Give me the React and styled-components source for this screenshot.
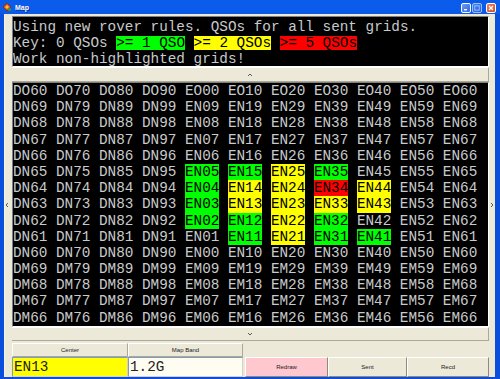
import React from 'react';
import styled, { createGlobalStyle } from 'styled-components';

const Global = createGlobalStyle`
  html, body { margin: 0; padding: 0; overflow: hidden; background: #0A4FDC; }
  #root { width: 500px; height: 379px; }
`;

const Window = styled.div`
  width: 500px;
  height: 379px;
  display: flex;
  flex-direction: column;
  background: #0A4FDC;
`;

const TitleBar = styled.div`
  height: 14px;
  flex: none;
  display: flex;
  align-items: center;
  padding: 0 4px 0 2px;
  background: linear-gradient(to bottom, #0A5BEA 0%, #0B5CEC 60%, #0A58E4 100%);
  font-family: "Liberation Sans", Arial, sans-serif;
`;

const TitleText = styled.span`
  color: #fff;
  font-weight: bold;
  font-size: 7px;
  margin-left: 3px;
  flex: 1;
  text-shadow: 1px 1px 0 #0A2FA0;
`;

const Controls = styled.div`
  display: flex;
  gap: 1px;
  align-items: center;
  margin-top: 2px;
`;

const CtrlBtn = styled.div`
  width: 10px;
  height: 10px;
  box-sizing: border-box;
  border: 1px solid #fff;
  border-radius: 2px;
  background: ${p => p.$close ? 'linear-gradient(135deg, #E9826A, #D2461E)' : 'linear-gradient(135deg, #6D9BF5, #2F66E2)'};
  opacity: ${p => p.$disabled ? 0.6 : 1};
  margin-left: ${p => p.$close ? '3px' : '0'};
  display: flex;
  align-items: center;
  justify-content: center;
`;

const Frame = styled.div`
  flex: 1;
  display: flex;
  padding: 0 5px 2px 4px;
  min-height: 0;
`;

const Client = styled.div`
  flex: 1;
  background: #ECE9D8;
  display: grid;
  grid-template-columns: 8px 1fr 6px;
  grid-template-rows: 53px 15px 245px 14px 36px;
  box-shadow: inset 1px 0 0 #F4F2E8;
`;

const Mono = styled.div`
  font-family: "Liberation Mono", "Courier New", monospace;
  font-size: 14.33px;
  color: #C8CACC;
  background: #000;
  overflow: hidden;
  box-sizing: border-box;
`;

const TopPanel = styled(Mono)`
  grid-column: 2;
  grid-row: 1;
  margin-top: 2px;
  border: 1px solid;
  border-color: #7F7F7F #FFFFFF #FFFFFF #7F7F7F;
  padding-top: 2px;
  line-height: 16px;
  white-space: pre;
`;

const Line = styled.div`
  height: 16px;
`;

const Hl = styled.span`
  display: inline-block;
  height: 14px;
  line-height: 14px;
  vertical-align: top;
  margin-top: 1px;
  color: #000;
  background: ${p => p.$c};
`;

const ArrowBar = styled.div`
  grid-column: 2;
  grid-row: ${p => p.$row};
  box-sizing: border-box;
  border-top: 1px solid #FFFFFF;
  border-bottom: 1px solid #ACA899;
  border-right: 1px solid #ACA899;
  background: #ECE9D8;
  display: flex;
  align-items: center;
  justify-content: center;
`;

const SideArrow = styled.div`
  grid-row: 3;
  grid-column: ${p => p.$col};
  display: flex;
  align-items: center;
  justify-content: ${p => p.$col === 1 ? 'flex-start' : 'flex-end'};
  padding: 0 1px;
`;

const GridPanel = styled(Mono)`
  grid-column: 2;
  grid-row: 3;
  border: 1px solid;
  border-color: #7F7F7F #FFFFFF #FFFFFF #7F7F7F;
  display: grid;
  grid-template-columns: repeat(11, 4ch);
  grid-auto-rows: 16.2px;
  column-gap: 1ch;
  align-content: start;
`;

const Cell = styled.span`
  line-height: 16.2px;
  white-space: pre;
  background: ${p => p.$bg || 'transparent'};
  color: ${p => p.$bg ? '#000' : '#C8CACC'};
`;

const Bottom = styled.div`
  grid-column: 2;
  grid-row: 5;
  display: grid;
  grid-template-columns: 116px 115px 85px 79px 1fr;
  grid-template-rows: 14px 20px;
  padding-top: 2px;
`;

const Label = styled.div`
  grid-row: 1;
  grid-column: ${p => p.$col};
  box-sizing: border-box;
  border: 1px solid;
  border-color: #FFFFFF #ACA899 #ACA899 #FFFFFF;
  background: #ECE9D8;
  font-family: "Liberation Sans", Arial, sans-serif;
  font-size: 6px;
  color: #222;
  display: flex;
  align-items: center;
  justify-content: center;
`;

const Field = styled.div`
  grid-row: 2;
  grid-column: ${p => p.$col};
  box-sizing: border-box;
  border: 1px solid;
  border-color: #7F9DB9 #D4D0C8 #D4D0C8 #7F9DB9;
  background: ${p => p.$bg};
  font-family: "Liberation Mono", "Courier New", monospace;
  font-size: 14.33px;
  color: #222;
  display: flex;
  align-items: center;
  padding-left: 1px;
`;

const Button = styled.div`
  grid-row: 2;
  grid-column: ${p => p.$col};
  margin-left: ${p => p.$first ? '2px' : '0'};
  box-sizing: border-box;
  border: 1px solid;
  border-color: #FFFFFF #8E8B7C #8E8B7C #FFFFFF;
  background: ${p => p.$bg || '#ECE9D8'};
  font-family: "Liberation Sans", Arial, sans-serif;
  font-size: 6px;
  color: #222;
  display: flex;
  align-items: center;
  justify-content: center;
`;

const Chevron = ({ dir }) => {
  const pts = {
    up: '0,3 2,1 4,3',
    down: '0,1 2,3 4,1',
    left: '3,0 1,2 3,4',
    right: '1,0 3,2 1,4',
  }[dir];
  return (
    <svg width="4" height="4" viewBox="0 0 4 4">
      <polyline points={pts} fill="none" stroke="#5A5A5A" strokeWidth="1" />
    </svg>
  );
};

const AppIcon = () => (
  <svg width="10" height="10" viewBox="0 0 10 10">
    <path d="M1 5 L5 1 L9 5 L5 9 Z" fill="#D8541C" stroke="#7A2A08" strokeWidth="0.8" />
    <path d="M3 5 L5 3 L7 5 L5 7 Z" fill="#F5C040" />
    <circle cx="7.5" cy="7.5" r="1.6" fill="#3A9A2A" />
  </svg>
);

const cols = ['D6', 'D7', 'D8', 'D9', 'E0', 'E1', 'E2', 'E3', 'E4', 'E5', 'E6'];
const rows = ['O0', 'N9', 'N8', 'N7', 'N6', 'N5', 'N4', 'N3', 'N2', 'N1', 'N0', 'M9', 'M8', 'M7', 'M6'];

const G = '#00FF00';
const Y = '#FFFF00';
const R = '#FF0000';
const highlights = {
  EN05: G, EN04: G, EN03: G, EN02: G,
  EN15: G, EN14: Y, EN13: Y, EN12: G, EN11: G,
  EN25: Y, EN24: Y, EN23: Y, EN22: Y, EN21: Y,
  EN35: G, EN34: R, EN33: Y, EN32: G, EN31: G,
  EN44: Y, EN43: Y, EN41: G,
};

export default function App() {
  const cells = [];
  rows.forEach(r => {
    cols.forEach(c => {
      const name = c[0] + r[0] + c[1] + r[1];
      cells.push(<Cell key={name} $bg={highlights[name]}>{name}</Cell>);
    });
  });

  return (
    <>
      <Global />
      <Window>
        <TitleBar>
          <AppIcon />
          <TitleText>Map</TitleText>
          <Controls>
            <CtrlBtn>
              <svg width="6" height="6" viewBox="0 0 6 6"><rect x="1" y="4" width="3" height="1.4" fill="#fff" /></svg>
            </CtrlBtn>
            <CtrlBtn $disabled>
              <svg width="6" height="6" viewBox="0 0 6 6"><rect x="0.8" y="0.8" width="4.4" height="4.4" fill="none" stroke="#fff" strokeWidth="1" /></svg>
            </CtrlBtn>
            <CtrlBtn $close>
              <svg width="6" height="6" viewBox="0 0 6 6"><path d="M1 1 L5 5 M5 1 L1 5" stroke="#fff" strokeWidth="1.3" /></svg>
            </CtrlBtn>
          </Controls>
        </TitleBar>
        <Frame>
          <Client>
            <TopPanel>
              <Line>Using new rover rules. QSOs for all sent grids.</Line>
              <Line>Key: 0 QSOs <Hl $c={G}>&gt;= 1 QSO</Hl> <Hl $c={Y}>&gt;= 2 QSOs</Hl> <Hl $c={R}>&gt;= 5 QSOs</Hl></Line>
              <Line>Work non-highlighted grids!</Line>
            </TopPanel>
            <ArrowBar $row={2}><Chevron dir="up" /></ArrowBar>
            <SideArrow $col={1}><Chevron dir="left" /></SideArrow>
            <GridPanel>{cells}</GridPanel>
            <SideArrow $col={3}><Chevron dir="right" /></SideArrow>
            <ArrowBar $row={4}><Chevron dir="down" /></ArrowBar>
            <Bottom>
              <Label $col={1}>Center</Label>
              <Label $col={2}>Map Band</Label>
              <Field $col={1} $bg="#FFFF00">EN13</Field>
              <Field $col={2} $bg="#FFFDF2">1.2G</Field>
              <Button $col={3} $first $bg="#FFC7CE">Redraw</Button>
              <Button $col={4}>Sent</Button>
              <Button $col={5}>Recd</Button>
            </Bottom>
          </Client>
        </Frame>
      </Window>
    </>
  );
}
